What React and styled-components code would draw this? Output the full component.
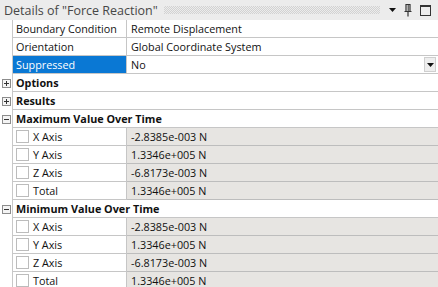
import React from 'react';
import styled, { createGlobalStyle } from 'styled-components';

const Global = createGlobalStyle`
  html, body { margin: 0; padding: 0; background: #ffffff; }
  body { font-family: "Open Sans", "Noto Sans", "Liberation Sans", sans-serif; }
`;

const Panel = styled.div`
  width: 438px;
  height: 287px;
  overflow: hidden;
  background: #ffffff;
`;

const TitleBar = styled.div`
  height: 20px;
  display: flex;
  align-items: center;
  background: #ececec;
  padding-left: 4px;
  box-sizing: border-box;
`;

const Title = styled.div`
  font-size: 12.5px;
  color: #474747;
  white-space: nowrap;
`;

const Grip = styled.div`
  flex: 1;
  height: 8px;
  margin: 0 9px 0 6px;
  background: repeating-conic-gradient(#d2d2d2 0 25%, transparent 0 50%) 0 0 / 2px 2px;
`;

const TitleButtons = styled.div`
  display: flex;
  align-items: center;
  gap: 8px;
  padding-right: 7px;
`;

const Row = styled.div`
  display: grid;
  grid-template-columns: 13px 114px 1fr;
  height: 18px;
  font-size: 10.8px;
  color: #111111;
`;

const Gutter = styled.div`
  display: flex;
  align-items: center;
  justify-content: center;
  border-right: 1px solid #c8c8c8;
`;

const Label = styled.div`
  display: flex;
  align-items: center;
  gap: 4px;
  padding-left: 3px;
  border-bottom: 1px solid #c6c6c6;
  border-right: 1px solid #c6c6c6;
  background: ${p => (p.$selected ? '#0a78d4' : '#ffffff')};
  color: ${p => (p.$selected ? '#ffffff' : '#111111')};
  white-space: nowrap;
  overflow: hidden;
`;

const Value = styled.div`
  display: flex;
  align-items: center;
  justify-content: space-between;
  padding-left: 4px;
  border-bottom: 1px solid ${p => (p.$readonly ? '#bdbdbd' : '#c6c6c6')};
  background: ${p => (p.$readonly ? '#e7e5e2' : '#ffffff')};
  white-space: nowrap;
  overflow: hidden;
`;

const Header = styled.div`
  grid-column: 2 / 4;
  display: flex;
  align-items: center;
  padding-left: 3px;
  font-weight: 700;
  border-bottom: 1px solid #c6c6c6;
`;

const Expander = styled.div`
  width: 7px;
  height: 7px;
  border: 1px solid #8c8c8c;
  background: #f4f4f4;
  position: relative;
  &::before {
    content: '';
    position: absolute;
    left: 1px;
    right: 1px;
    top: 3px;
    height: 1px;
    background: #333;
  }
  &::after {
    content: '';
    display: ${p => (p.$open ? 'none' : 'block')};
    position: absolute;
    top: 1px;
    bottom: 1px;
    left: 3px;
    width: 1px;
    background: #333;
  }
`;

const Check = styled.div`
  width: 11px;
  height: 11px;
  border: 1px solid #bcbcbc;
  background: #ffffff;
  flex: none;
`;

const DropButton = styled.div`
  width: 12px;
  height: 15px;
  margin-right: 2px;
  background: #eeeeee;
  border: 1px solid #cfcfcf;
  display: flex;
  align-items: center;
  justify-content: center;
  box-sizing: border-box;
`;

const Arrow = () => (
  <svg width="7" height="4" viewBox="0 0 7 4"><path d="M0 0h7L3.5 4z" fill="#111" /></svg>
);

const Pin = () => (
  <svg width="8" height="13" viewBox="0 0 8 13">
    <path d="M2 0.5h4v7H2z M0.5 7.5h7" stroke="#333" strokeWidth="1.2" fill="none" />
    <path d="M4 7.5v5" stroke="#333" strokeWidth="1.2" />
    <path d="M4.2 1v6" stroke="#333" strokeWidth="1" />
  </svg>
);

const Square = () => (
  <svg width="11" height="11" viewBox="0 0 11 11">
    <rect x="0.5" y="0.5" width="10" height="10" fill="none" stroke="#333" />
    <path d="M0.5 1.5h10" stroke="#333" />
  </svg>
);

const Prop = ({ label, value, selected, dropdown }) => (
  <Row>
    <Gutter />
    <Label $selected={selected}>{label}</Label>
    <Value>
      {value}
      {dropdown && <DropButton><Arrow /></DropButton>}
    </Value>
  </Row>
);

const Section = ({ title, open }) => (
  <Row>
    <Gutter><Expander $open={open} /></Gutter>
    <Header>{title}</Header>
  </Row>
);

const Result = ({ label, value }) => (
  <Row>
    <Gutter />
    <Label><Check />{label}</Label>
    <Value $readonly>{value}</Value>
  </Row>
);

const values = [
  ['X Axis', '-2.8385e-003 N'],
  ['Y Axis', '1.3346e+005 N'],
  ['Z Axis', '-6.8173e-003 N'],
  ['Total', '1.3346e+005 N'],
];

export default function App() {
  return (
    <Panel>
      <Global />
      <TitleBar>
        <Title>Details of "Force Reaction"</Title>
        <Grip />
        <TitleButtons>
          <Arrow />
          <Pin />
          <Square />
        </TitleButtons>
      </TitleBar>
      <Prop label="Boundary Condition" value="Remote Displacement" />
      <Prop label="Orientation" value="Global Coordinate System" />
      <Prop label="Suppressed" value="No" selected dropdown />
      <Section title="Options" />
      <Section title="Results" />
      <Section title="Maximum Value Over Time" open />
      {values.map(([l, v]) => <Result key={'max' + l} label={l} value={v} />)}
      <Section title="Minimum Value Over Time" open />
      {values.map(([l, v]) => <Result key={'min' + l} label={l} value={v} />)}
    </Panel>
  );
}
